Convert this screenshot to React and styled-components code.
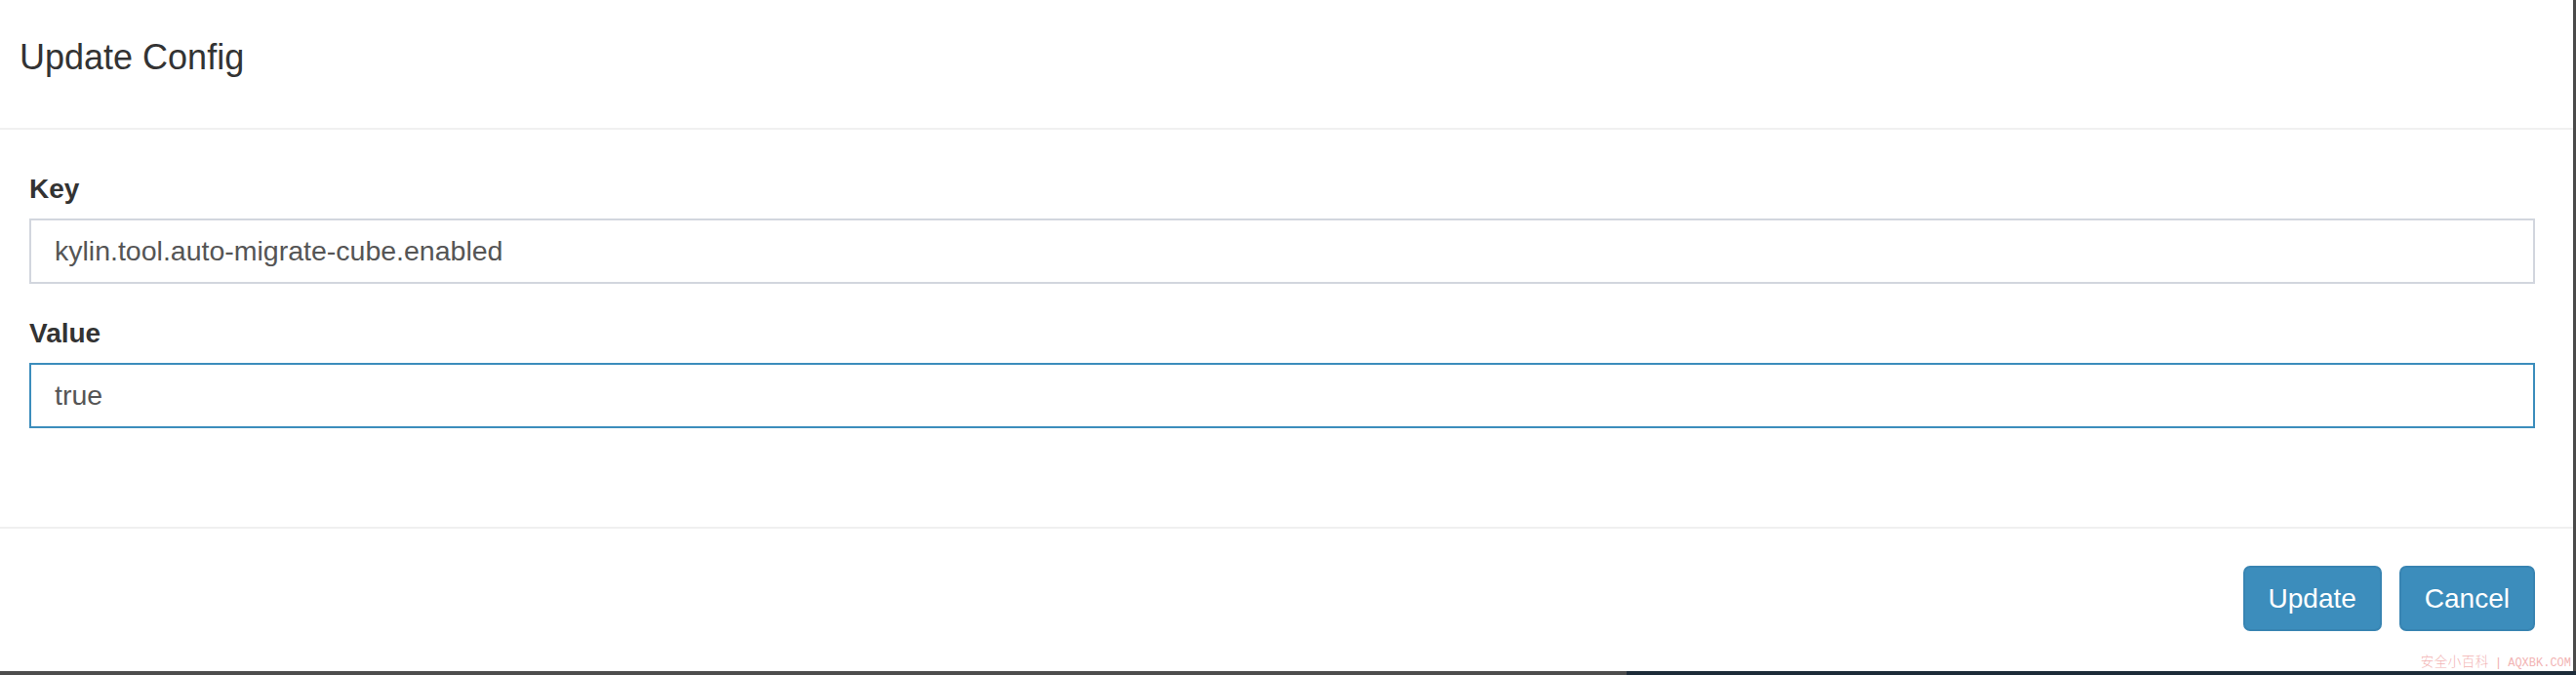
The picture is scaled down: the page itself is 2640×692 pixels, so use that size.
import React from "react";
import styled, { createGlobalStyle } from "styled-components";

const GlobalStyle = createGlobalStyle`
  html, body { margin: 0; padding: 0; background: #ffffff; }
  body { font-family: "Liberation Sans", Arial, Helvetica, sans-serif; }
  * { box-sizing: border-box; }
`;

const Screen = styled.div`
  width: 2640px;
  height: 692px;
  display: flex;
  flex-direction: column;
  overflow: hidden;
`;

const Stage = styled.div`
  height: 688px;
  display: flex;
`;

const Modal = styled.div`
  position: relative;
  flex: 1;
  display: flex;
  flex-direction: column;
  background: #ffffff;
`;

const Header = styled.div`
  height: 133px;
  padding: 39px 20px 0;
  border-bottom: 2px solid #f0f0f0;
`;

const Title = styled.h4`
  margin: 0;
  font-size: 36px;
  line-height: 40px;
  font-weight: 400;
  color: #333333;
`;

const Body = styled.div`
  height: 407px;
  padding: 45px 39px 0 30px;
  display: flex;
  flex-direction: column;
  gap: 35px;
`;

const FormGroup = styled.div`
  display: flex;
  flex-direction: column;
  gap: 14px;
`;

const Label = styled.label`
  font-size: 28px;
  line-height: 32px;
  font-weight: 700;
  color: #333333;
`;

const Input = styled.input`
  width: 100%;
  height: 67px;
  padding: 0 24px;
  border: 2px solid ${(p) => (p.$focused ? "#3c8dbc" : "#d2d6de")};
  border-radius: 0;
  background: #ffffff;
  font-family: "Liberation Sans", Arial, Helvetica, sans-serif;
  font-size: 28.5px;
  color: #555555;
  outline: none;
`;

const Footer = styled.div`
  flex: 1;
  border-top: 2px solid #f0f0f0;
  padding: 38px 39px 0 0;
  display: flex;
  justify-content: flex-end;
  align-items: flex-start;
  gap: 18px;
`;

const Button = styled.button`
  height: 67px;
  padding: 0 24px;
  border: 2px solid #3884b2;
  border-radius: 7px;
  background: #3c8dbc;
  color: #ffffff;
  font-family: "Liberation Sans", Arial, Helvetica, sans-serif;
  font-size: 28px;
  line-height: 1;
  cursor: pointer;
`;

const Watermark = styled.div`
  position: absolute;
  right: 2px;
  bottom: 1px;
  display: flex;
  align-items: baseline;
  gap: 8px;
  color: #f2b4b4;
  font-size: 13.5px;
  line-height: 14px;
`;

const WatermarkCn = styled.span`
  font-family: "Noto Sans CJK SC", sans-serif;
  font-weight: 300;
  letter-spacing: 0.5px;
`;

const WatermarkEn = styled.span`
  font-family: "Liberation Mono", "DejaVu Sans Mono", monospace;
  font-size: 12px;
`;

const RightEdge = styled.div`
  width: 3px;
  background: #4a4a4a;
`;

const BottomStrip = styled.div`
  height: 4px;
  display: flex;
`;

const DimPart = styled.div`
  width: 1667px;
  background: #4d4d4d;
`;

const NavyPart = styled.div`
  flex: 1;
  background: #1c2b38;
`;

export default function App() {
  return (
    <>
      <GlobalStyle />
      <Screen>
        <Stage>
          <Modal>
            <Header>
              <Title>Update Config</Title>
            </Header>
            <Body>
              <FormGroup>
                <Label>Key</Label>
                <Input readOnly value="kylin.tool.auto-migrate-cube.enabled" />
              </FormGroup>
              <FormGroup>
                <Label>Value</Label>
                <Input $focused readOnly value="true" />
              </FormGroup>
            </Body>
            <Footer>
              <Button>Update</Button>
              <Button>Cancel</Button>
            </Footer>
            <Watermark>
              <WatermarkCn>安全小百科</WatermarkCn>
              <span>|</span>
              <WatermarkEn>AQXBK.COM</WatermarkEn>
            </Watermark>
          </Modal>
          <RightEdge />
        </Stage>
        <BottomStrip>
          <DimPart />
          <NavyPart />
        </BottomStrip>
      </Screen>
    </>
  );
}
